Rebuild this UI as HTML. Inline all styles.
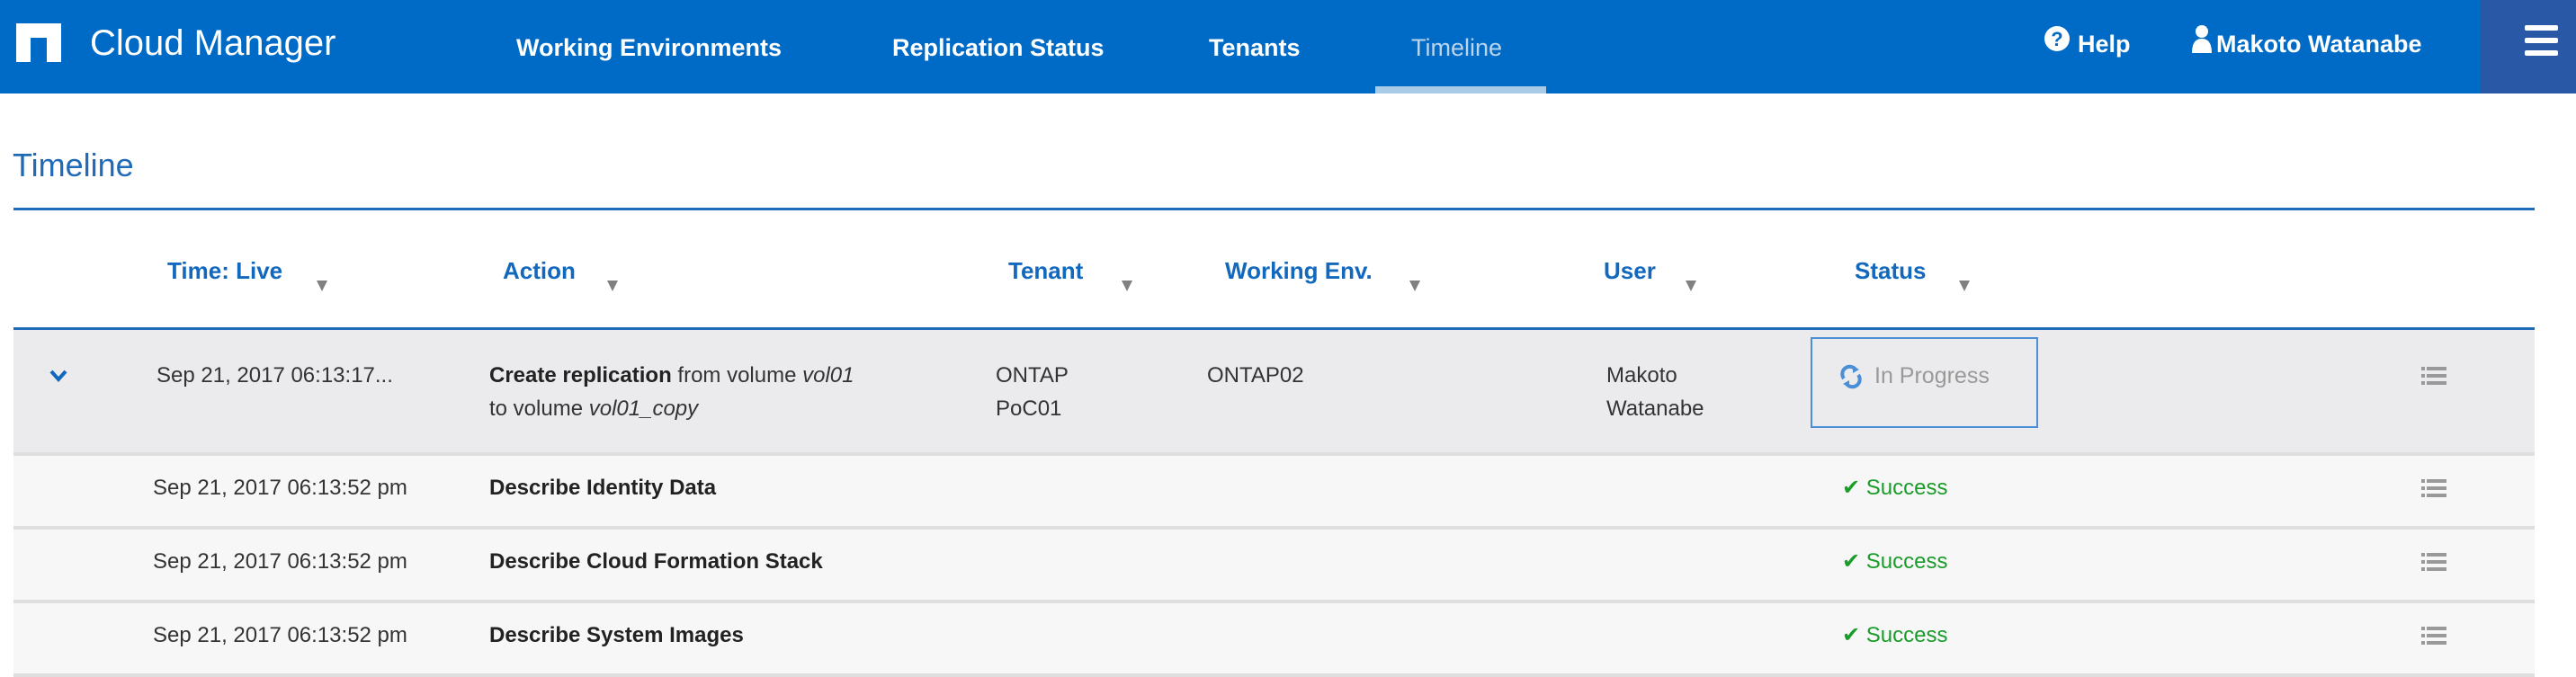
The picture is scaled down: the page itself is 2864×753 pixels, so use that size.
<!DOCTYPE html>
<html><head><meta charset="utf-8"><style>
*{margin:0;padding:0;box-sizing:border-box}
body{width:2864px;height:722px;overflow:hidden;background:#fff;font-family:"Liberation Sans",sans-serif;position:relative}
.a{position:absolute;white-space:nowrap}
.nav{position:absolute;left:0;top:0;width:2864px;height:104px;background:#006bc6}
.nav .t{color:#fff;font-size:27px;font-weight:bold;top:38px}
.hd{color:#1268bd;font-size:26px;font-weight:bold;top:286px}
.arr{top:312px;width:0;height:0;border-left:6px solid transparent;border-right:6px solid transparent;border-top:12px solid #808080}
.c{font-size:24px;color:#333}
.b{font-weight:bold;color:#222}
.row{position:absolute;left:15px;width:2803px;height:82px;background:#f7f7f7;border-bottom:4px solid #dedede}
.ok{color:#1a9c2a;font-size:24px}
</style></head><body>
<div class="nav">
 <div class="a" style="left:18px;top:26px;width:50px;height:43px;background:#fff"></div>
 <div class="a" style="left:34px;top:42px;width:18px;height:27px;background:#006bc6"></div>
 <div class="a" style="left:100px;top:26px;color:#fff;font-size:40px">Cloud Manager</div>
 <div class="a t" style="left:574px">Working Environments</div>
 <div class="a t" style="left:992px">Replication Status</div>
 <div class="a t" style="left:1344px">Tenants</div>
 <div class="a t" style="left:1569px;color:#b9d5ee;font-weight:normal">Timeline</div>
 <div class="a" style="left:1529px;top:96px;width:190px;height:8px;background:#a8cbe8"></div>
 <svg class="a" style="left:2272px;top:28px" width="30" height="30" viewBox="0 0 30 30"><circle cx="15" cy="15" r="14" fill="#fff"/><text x="15" y="23" text-anchor="middle" font-size="22" font-weight="bold" fill="#006bc6" font-family="Liberation Sans">?</text></svg>
 <div class="a t" style="left:2310px;top:34px">Help</div>
 <svg class="a" style="left:2436px;top:27px" width="24" height="32" viewBox="0 0 24 32"><circle cx="12" cy="8" r="7" fill="#fff"/><path d="M1 32 Q1 16 12 16 Q23 16 23 32Z" fill="#fff"/></svg>
 <div class="a t" style="left:2464px;top:34px">Makoto Watanabe</div>
 <div class="a" style="left:2758px;top:0;width:106px;height:104px;background:#2858a6"></div>
 <div class="a" style="left:2807px;top:28px;width:37px;height:6px;background:#fff;border-radius:2px"></div>
 <div class="a" style="left:2807px;top:42px;width:37px;height:6px;background:#fff;border-radius:2px"></div>
 <div class="a" style="left:2807px;top:56px;width:37px;height:6px;background:#fff;border-radius:2px"></div>
</div>
<div class="a" style="left:14px;top:163px;font-size:36px;color:#1f6bb8">Timeline</div>
<div class="a" style="left:15px;top:231px;width:2803px;height:3px;background:#1f6bb8"></div>

<div class="a hd" style="left:186px">Time: Live</div><div class="a arr" style="left:352px"></div>
<div class="a hd" style="left:559px">Action</div><div class="a arr" style="left:675px"></div>
<div class="a hd" style="left:1121px">Tenant</div><div class="a arr" style="left:1247px"></div>
<div class="a hd" style="left:1362px">Working Env.</div><div class="a arr" style="left:1567px"></div>
<div class="a hd" style="left:1783px">User</div><div class="a arr" style="left:1874px"></div>
<div class="a hd" style="left:2062px">Status</div><div class="a arr" style="left:2178px"></div>
<div class="a" style="left:15px;top:364px;width:2803px;height:3px;background:#1f6bb8"></div>

<div class="row" style="top:367px;height:140px;background:#ebebee"></div>
<svg class="a" style="left:54px;top:410px" width="22" height="16" viewBox="0 0 22 16"><path d="M3 3 L11 12 L19 3" stroke="#1268bd" stroke-width="4" fill="none"/></svg>
<div class="a c" style="left:174px;top:404px">Sep 21, 2017 06:13:17...</div>
<div class="a c" style="left:544px;top:404px"><span class="b">Create replication</span> from volume <i>vol01</i></div>
<div class="a c" style="left:544px;top:441px">to volume <i>vol01_copy</i></div>
<div class="a c" style="left:1107px;top:404px">ONTAP</div>
<div class="a c" style="left:1107px;top:441px">PoC01</div>
<div class="a c" style="left:1342px;top:404px">ONTAP02</div>
<div class="a c" style="left:1786px;top:404px">Makoto</div>
<div class="a c" style="left:1786px;top:441px">Watanabe</div>
<div class="a" style="left:2013px;top:375px;width:253px;height:101px;border:2px solid #4a90d9"></div>
<svg class="a" style="left:2046px;top:405px" width="24" height="28" viewBox="0 0 24 28"><path d="M4 16 A8 8 0 0 1 17 6" stroke="#4a8fd6" stroke-width="4" fill="none"/><path d="M20 12 A8 8 0 0 1 7 22" stroke="#4a8fd6" stroke-width="4" fill="none"/><path d="M14 2 L21 6 L14 10Z M10 18 L3 22 L10 26Z" fill="#4a8fd6"/></svg>
<div class="a" style="left:2084px;top:404px;font-size:25px;color:#999">In Progress</div>

<div class="row" style="top:507px;height:82px"></div>
<div class="row" style="top:589px;height:82px"></div>
<div class="row" style="top:671px;height:82px"></div>
<div class="a c" style="left:170px;top:529px">Sep 21, 2017 06:13:52 pm</div>
<div class="a c b" style="left:544px;top:529px">Describe Identity Data</div>
<div class="a c" style="left:170px;top:611px">Sep 21, 2017 06:13:52 pm</div>
<div class="a c b" style="left:544px;top:611px">Describe Cloud Formation Stack</div>
<div class="a c" style="left:170px;top:693px">Sep 21, 2017 06:13:52 pm</div>
<div class="a c b" style="left:544px;top:693px">Describe System Images</div>
<div class="a ok" style="left:2048px;top:528px">✔ Success</div>
<div class="a ok" style="left:2048px;top:610px">✔ Success</div>
<div class="a ok" style="left:2048px;top:692px">✔ Success</div>

<svg class="a" style="left:2692px;top:407px" width="28" height="22" viewBox="0 0 28 22"><g fill="#999"><rect x="0" y="1" width="4" height="4"/><rect x="6" y="1" width="22" height="4"/><rect x="0" y="9" width="4" height="4"/><rect x="6" y="9" width="22" height="4"/><rect x="0" y="17" width="4" height="4"/><rect x="6" y="17" width="22" height="4"/></g></svg>
<svg class="a" style="left:2692px;top:532px" width="28" height="22" viewBox="0 0 28 22"><g fill="#999"><rect x="0" y="1" width="4" height="4"/><rect x="6" y="1" width="22" height="4"/><rect x="0" y="9" width="4" height="4"/><rect x="6" y="9" width="22" height="4"/><rect x="0" y="17" width="4" height="4"/><rect x="6" y="17" width="22" height="4"/></g></svg>
<svg class="a" style="left:2692px;top:614px" width="28" height="22" viewBox="0 0 28 22"><g fill="#999"><rect x="0" y="1" width="4" height="4"/><rect x="6" y="1" width="22" height="4"/><rect x="0" y="9" width="4" height="4"/><rect x="6" y="9" width="22" height="4"/><rect x="0" y="17" width="4" height="4"/><rect x="6" y="17" width="22" height="4"/></g></svg>
<svg class="a" style="left:2692px;top:696px" width="28" height="22" viewBox="0 0 28 22"><g fill="#999"><rect x="0" y="1" width="4" height="4"/><rect x="6" y="1" width="22" height="4"/><rect x="0" y="9" width="4" height="4"/><rect x="6" y="9" width="22" height="4"/><rect x="0" y="17" width="4" height="4"/><rect x="6" y="17" width="22" height="4"/></g></svg>
</body></html>
